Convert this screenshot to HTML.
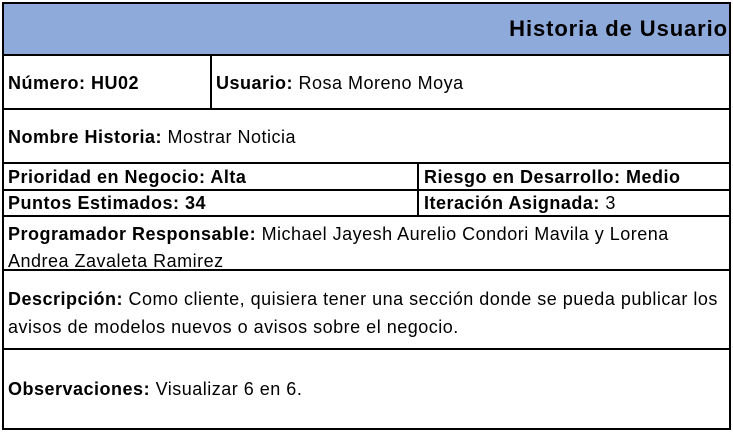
<!DOCTYPE html>
<html><head><style>
body{margin:0;width:733px;height:432px;background:#fff;position:relative;font-family:"Liberation Sans",Arial,sans-serif;color:#000;overflow:hidden}
.h{position:absolute;background:#000;height:2px}
.v{position:absolute;background:#000;width:2px}
.t{position:absolute;font-size:18px;letter-spacing:0.5px;white-space:nowrap;line-height:20px}
b{font-weight:bold}
</style></head><body>
<div style="position:absolute;left:3px;top:3px;width:727px;height:52px;background:#8eaadb"></div>
<div class="h" style="left:2px;top:2px;width:729px"></div>
<div class="h" style="left:2px;top:54px;width:729px"></div>
<div class="h" style="left:2px;top:108px;width:729px"></div>
<div class="h" style="left:2px;top:162px;width:729px"></div>
<div class="h" style="left:2px;top:189px;width:729px"></div>
<div class="h" style="left:2px;top:215px;width:729px"></div>
<div class="h" style="left:2px;top:269px;width:729px"></div>
<div class="h" style="left:2px;top:348px;width:729px"></div>
<div class="h" style="left:2px;top:428px;width:729px"></div>
<div class="v" style="left:2px;top:2px;height:428px"></div>
<div class="v" style="left:729px;top:2px;height:428px"></div>
<div class="v" style="left:210px;top:54px;height:56px"></div>
<div class="v" style="left:417px;top:162px;height:55px"></div>
<div class="t" style="right:5px;top:16px;font-size:22px;letter-spacing:0.9px;line-height:26px"><b>Historia de Usuario</b></div>
<div class="t" style="left:8px;top:73px"><b>Número: HU02</b></div>
<div class="t" style="left:216px;top:73px"><b>Usuario:</b> Rosa Moreno Moya</div>
<div class="t" style="left:8px;top:127px"><b>Nombre Historia:</b> Mostrar Noticia</div>
<div class="t" style="left:8px;top:167px"><b>Prioridad en Negocio: Alta</b></div>
<div class="t" style="left:424px;top:167px"><b>Riesgo en Desarrollo: Medio</b></div>
<div class="t" style="left:8px;top:193px"><b>Puntos Estimados: 34</b></div>
<div class="t" style="left:424px;top:193px"><b>Iteración Asignada:</b> 3</div>
<div class="t" style="left:8px;top:221px;line-height:27px"><b>Programador Responsable:</b> Michael Jayesh Aurelio Condori Mavila y Lorena<br>Andrea Zavaleta Ramirez</div>
<div class="t" style="left:8px;top:285px;line-height:28px"><b>Descripción:</b> Como cliente, quisiera tener una sección donde se pueda publicar los<br>avisos de modelos nuevos o avisos sobre el negocio.</div>
<div class="t" style="left:8px;top:379px"><b>Observaciones:</b> Visualizar 6 en 6.</div>
</body></html>
